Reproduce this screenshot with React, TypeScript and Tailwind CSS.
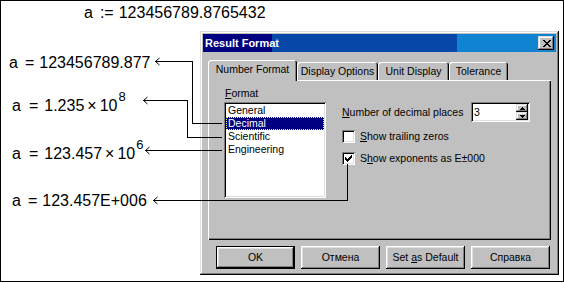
import React from "react";

// Win98 bevels
const raised =
  "shadow-[inset_-1px_-1px_#000,inset_1px_1px_#fff,inset_-2px_-2px_#808080,inset_2px_2px_#dfdfdf]";
const windowFrame =
  "shadow-[inset_-1px_-1px_#000,inset_1px_1px_#dfdfdf,inset_-2px_-2px_#808080,inset_2px_2px_#fff]";
const sunken =
  "shadow-[inset_1px_1px_#808080,inset_-1px_-1px_#fff,inset_2px_2px_#000,inset_-2px_-2px_#dfdfdf]";

const ws = "font-['Liberation_Sans',Arial,sans-serif] text-[16px] leading-[16px] h-[16px] text-black whitespace-nowrap";

function U({ children }: { children: React.ReactNode }) {
  return <span className="underline underline-offset-[1px] decoration-1">{children}</span>;
}

function Pixels({ rows }: { rows: string[] }) {
  const w = rows[0].length;
  const h = rows.length;
  return (
    <svg width={w} height={h} viewBox={`0 0 ${w} ${h}`} shapeRendering="crispEdges" className="block">
      {rows.flatMap((r, y) =>
        r.split("").map((c, x) =>
          c === "#" ? <rect key={`${x}-${y}`} x={x} y={y} width={1} height={1} fill="#000" /> : null
        )
      )}
    </svg>
  );
}

const closeX = ["##....##", ".##..##.", "..####..", "...##...", "..####..", ".##..##.", "##....##"];
const check = ["......#", ".....##", "#...###", "##.###.", "#####..", ".###...", "..#...."];
const upArrow = ["..#..", ".###.", "#####"];
const downArrow = ["#####", ".###.", "..#.."];

const tabs = [
  { label: "Number Format", cls: "w-[89px] h-[21px] pt-[3px]" },
  { label: "Display Options", cls: "w-[81px] h-[18px] pt-[3px] mb-px" },
  { label: "Unit Display", cls: "w-[71px] h-[18px] pt-[3px] mb-px" },
  { label: "Tolerance", cls: "w-[59px] h-[18px] pt-[3px] mb-px" },
];

const formats = ["General", "Decimal", "Scientific", "Engineering"];

function Button({ children, isDefault }: { children: React.ReactNode; isDefault?: boolean }) {
  return (
    <div
      className={`w-[79px] h-[23px] bg-[#c0c0c0] flex items-center justify-center ${
        isDefault ? "border border-black" : ""
      } ${raised}`}
    >
      <span className="whitespace-nowrap">{children}</span>
    </div>
  );
}

function ResultFormatDialog() {
  return (
    <div
      className={`w-[359px] h-[244px] shrink-0 bg-[#c0c0c0] p-[3px] flex flex-col font-['Liberation_Sans',Arial,sans-serif] text-[10.5px] leading-[13px] text-black ${windowFrame}`}
    >
      {/* title bar */}
      <div className="h-[18px] flex items-center justify-between pl-[2px] pr-[2px] bg-[linear-gradient(90deg,#000080_0%,#000080_19.5%,#0848a8_19.5%,#0848a8_72%,#1084d0_72%)]">
        <span className="text-white font-bold text-[11px] leading-[18px]">Result Format</span>
        <div className={`w-[16px] h-[14px] bg-[#c0c0c0] flex items-center justify-center pl-px ${windowFrame}`}>
          <Pixels rows={closeX} />
        </div>
      </div>

      {/* tabs */}
      <div className="mt-[8px] ml-[5px] flex items-end h-[21px] relative z-10 -mb-px">
        {tabs.map((t) => (
          <div
            key={t.label}
            className={`${t.cls} bg-[#c0c0c0] rounded-t-[3px] text-center whitespace-nowrap shadow-[inset_1px_1px_#fff,inset_-1px_0_#000,inset_-2px_0_#808080]`}
          >
            {t.label}
          </div>
        ))}
      </div>

      {/* panel */}
      <div className="ml-[5px] w-[343px] h-[160px] flex items-start shadow-[inset_1px_1px_#fff,inset_-1px_-1px_#000,inset_-2px_-2px_#808080]">
        <div className="pl-[16px] pt-[7px]">
          <div className="h-[13px] pl-[1px]">
            <U>F</U>ormat
          </div>
          <div className={`mt-[2px] w-[102px] h-[96px] p-[2px] bg-white ${sunken}`}>
            {formats.map((f) =>
              f === "Decimal" ? (
                <div
                  key={f}
                  className="h-[13px] pl-[2px] bg-[#000080] text-white outline outline-1 outline-dotted outline-[#ffff80] -outline-offset-1"
                >
                  {f}
                </div>
              ) : (
                <div key={f} className="h-[13px] pl-[2px]">
                  {f}
                </div>
              )
            )}
          </div>
        </div>

        <div className="ml-[16px] pt-[22px]">
          <div className="flex items-center h-[20px]">
            <div className="w-[129px] whitespace-nowrap">
              <U>N</U>umber of decimal places
            </div>
            <div className={`w-[59px] h-[20px] bg-white p-[2px] flex ${sunken}`}>
              <div className="flex-1 pl-[1px] leading-[16px]">3</div>
              <div className="w-[12px] flex flex-col">
                <div className={`h-[8px] bg-[#c0c0c0] flex items-center justify-center ${windowFrame}`}>
                  <Pixels rows={upArrow} />
                </div>
                <div className={`h-[8px] bg-[#c0c0c0] flex items-center justify-center ${windowFrame}`}>
                  <Pixels rows={downArrow} />
                </div>
              </div>
            </div>
          </div>

          <div className="mt-[8px] flex items-center h-[13px]">
            <div className={`w-[13px] h-[13px] bg-white ${sunken}`} />
            <span className="ml-[5px] whitespace-nowrap">
              <U>S</U>how trailing zeros
            </span>
          </div>

          <div className="mt-[9px] flex items-center h-[13px]">
            <div className={`w-[13px] h-[13px] bg-white flex items-center justify-center ${sunken}`}>
              <Pixels rows={check} />
            </div>
            <span className="ml-[5px] whitespace-nowrap">
              S<U>h</U>ow exponents as E±000
            </span>
          </div>
        </div>
      </div>

      {/* buttons */}
      <div className="mt-[6px] ml-[13px] flex gap-[6px]">
        <Button isDefault>OK</Button>
        <Button>Отмена</Button>
        <Button>
          Set <U>a</U>s Default
        </Button>
        <Button>Справка</Button>
      </div>
    </div>
  );
}

export default function App() {
  return (
    <div className="w-[564px] h-[283px] bg-white relative overflow-hidden">
      <div className="h-[282px] border border-black flex flex-col">
        <div className="h-[30px] pl-[83px] pt-[4px] shrink-0">
          <div className={`${ws} flex`}>
            <span>a</span>
            <span className="ml-[7px]">:=</span>
            <span className="ml-[5px]">123456789.8765432</span>
          </div>
        </div>

        <div className="flex">
          <div className="w-[199px] shrink-0">
            <div className={`${ws} flex mt-[24px] pl-[8px]`}>
              <span>a</span>
              <span className="ml-[7px]">=</span>
              <span className="ml-[5px]">123456789.877</span>
            </div>
            <div className={`${ws} flex items-start mt-[27px] pl-[11px]`}>
              <span>a</span>
              <span className="ml-[8px]">=</span>
              <span className="ml-[6px]">1.235</span>
              <span className="ml-[3px]">×</span>
              <span className="ml-[3px]">10</span>
              <span className="ml-[1px] -mt-[9px] text-[13px]">8</span>
            </div>
            <div className={`${ws} flex items-start mt-[32px] pl-[11px]`}>
              <span>a</span>
              <span className="ml-[8px]">=</span>
              <span className="ml-[6px]">123.457</span>
              <span className="ml-[3px]">×</span>
              <span className="ml-[3px]">10</span>
              <span className="ml-[1px] -mt-[9px] text-[13px]">6</span>
            </div>
            <div className={`${ws} flex mt-[31px] pl-[11px]`}>
              <span>a</span>
              <span className="ml-[7px]">=</span>
              <span className="ml-[5px]">123.457E+006</span>
            </div>
          </div>
          <ResultFormatDialog />
        </div>
      </div>

      {/* connector arrows drawn over the worksheet and dialog */}
      <svg
        className="absolute top-0 left-0 pointer-events-none z-20"
        width={564}
        height={283}
        viewBox="0 0 564 283"
        fill="none"
        stroke="#000"
        strokeWidth={1}
      >
        <path d="M155 61.5H192.5V123.5H222" shapeRendering="crispEdges" />
        <path d="M159.5 58L155.5 61.5L159.5 65" />
        <path d="M143 100.5H187.5V137.5H222" shapeRendering="crispEdges" />
        <path d="M147.5 97L143.5 100.5L147.5 104" />
        <path d="M145 150.5H222" shapeRendering="crispEdges" />
        <path d="M149.5 147L145.5 150.5L149.5 154" />
        <path d="M153 200.5H347.5V164" shapeRendering="crispEdges" />
        <path d="M157.5 197L153.5 200.5L157.5 204" />
      </svg>
    </div>
  );
}
